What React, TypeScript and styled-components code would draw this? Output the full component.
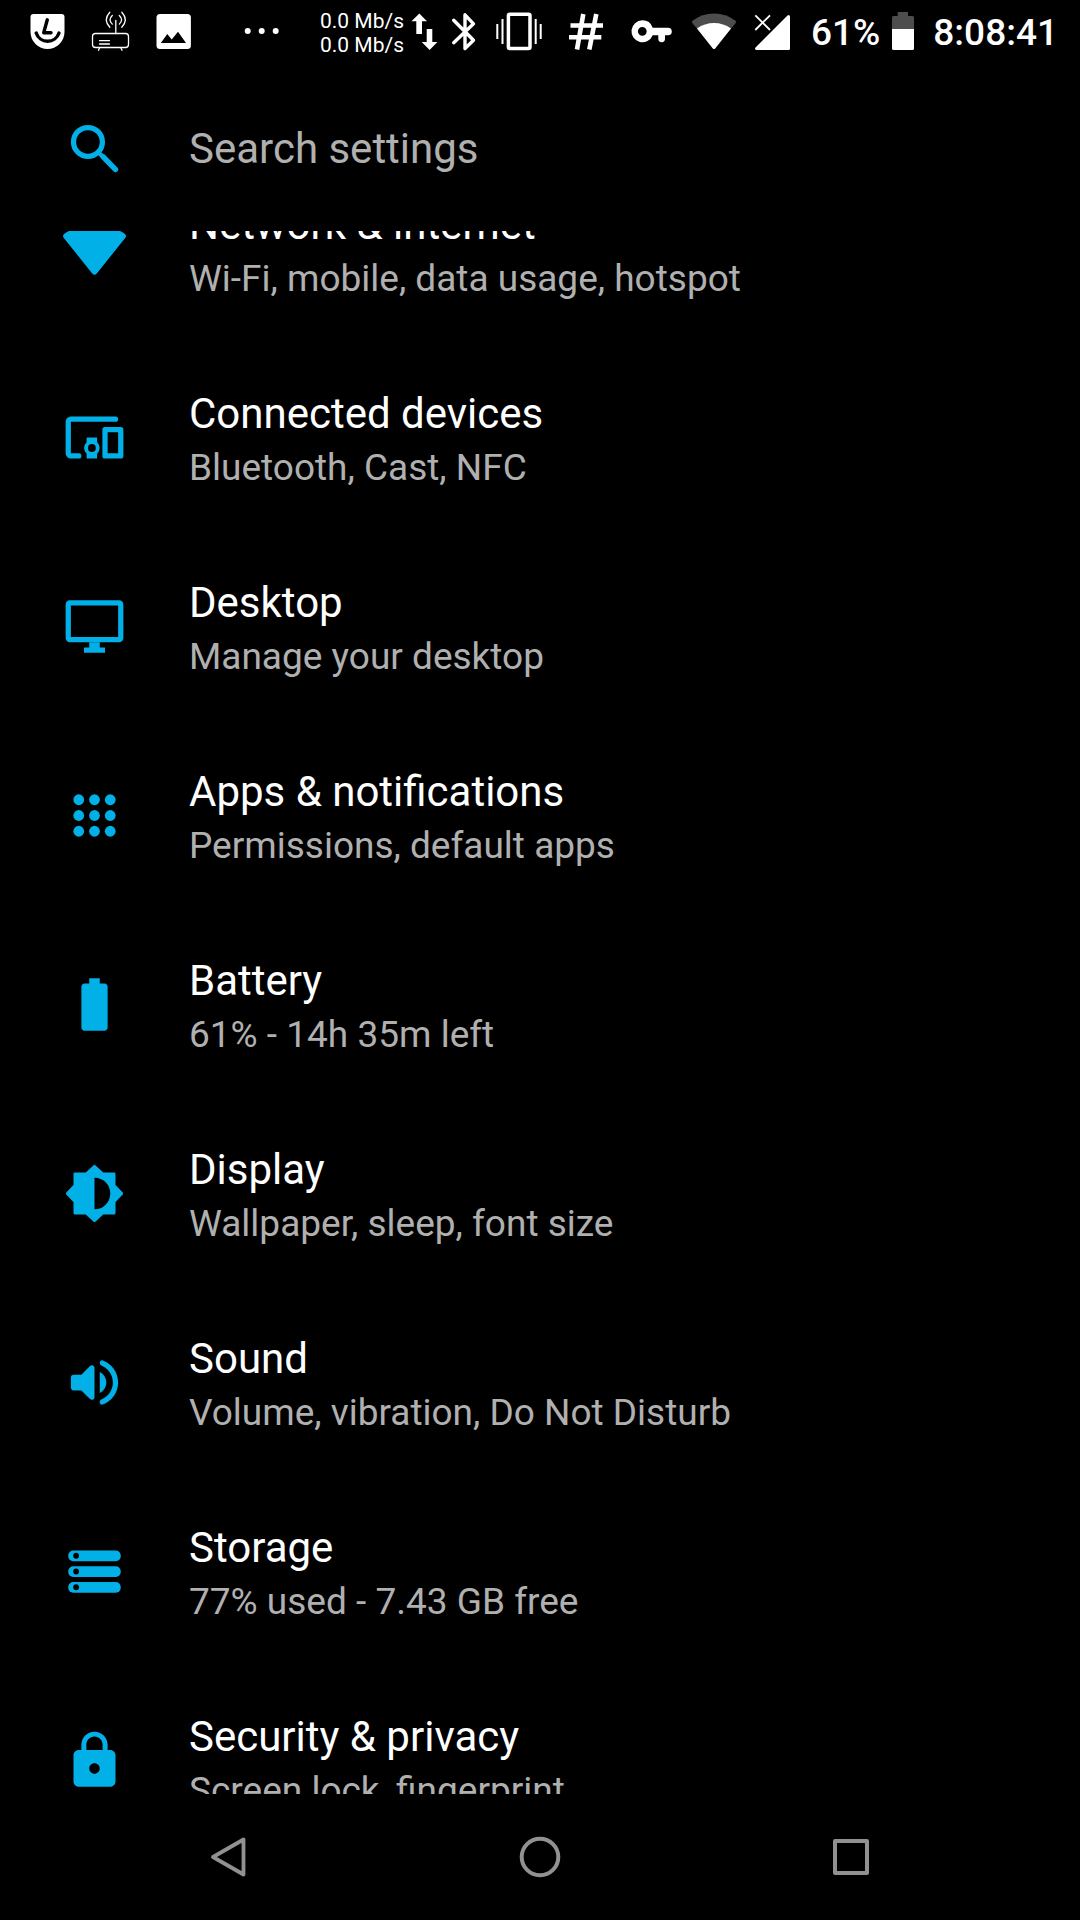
import React, { useLayoutEffect, useRef } from "react";
import styled, { createGlobalStyle } from "styled-components";

const ACCENT = "#00b0e6";
const SCROLLED = 77;

const GlobalStyle = createGlobalStyle`
  *, *::before, *::after { box-sizing: border-box; }
  body {
    margin: 0;
    background: #000;
    color: #fff;
    font-family: Roboto, "Noto Sans", sans-serif;
  }
`;

const Screen = styled.div`
  display: flex;
  flex-direction: column;
  height: 100vh;
  background: #000;
`;

const StatusBar = styled.header`
  display: flex;
  flex: none;
  justify-content: space-between;
  height: 63px;
  padding: 0 22px 0 16px;
  overflow: hidden;
`;

const StatusGroup = styled.div`
  display: flex;
  align-items: center;
`;

const Speed = styled.div`
  padding-top: 2px;
  font-size: 21px;
  line-height: 24px;
  white-space: nowrap;
`;

const StatusText = styled.span<{ $lead: number }>`
  margin-left: ${(p) => p.$lead}px;
  padding-top: 2px;
  font-size: 37px;
  font-weight: 500;
  line-height: 44px;
  white-space: nowrap;
`;

const Glyph = styled.svg`
  display: block;
  flex: none;
`;

const SearchBar = styled.label`
  display: flex;
  flex: none;
  align-items: center;
  gap: 63px;
  height: 168px;
  padding: 2px 63px 0;
`;

const SearchInput = styled.input`
  flex: 1;
  min-width: 0;
  height: 84px;
  padding: 0;
  border: 0;
  outline: 0;
  background: transparent;
  color: #fff;
  font: inherit;
  font-size: 42px;
  &::placeholder { color: #b0b0b0; opacity: 1; }
`;

const ScrollArea = styled.main`
  flex: 1;
  min-height: 0;
  overflow-y: auto;
  scrollbar-width: none;
`;

const List = styled.ul`
  margin: 0;
  padding: 0;
  list-style: none;
`;

const Row = styled.a`
  display: flex;
  align-items: center;
  gap: 63px;
  height: 189px;
  padding: 0 63px;
  color: inherit;
  text-decoration: none;
`;

const RowIcon = styled.svg`
  display: block;
  flex: none;
  width: 63px;
  height: 63px;
  fill: ${ACCENT};
`;

const RowText = styled.span`
  display: flex;
  flex-direction: column;
  padding-top: 4px;
  white-space: nowrap;
`;

const Title = styled.span`
  font-size: 42px;
  line-height: 56px;
`;

const Summary = styled.span`
  font-size: 37px;
  line-height: 52px;
  color: #b0b0b0;
`;

const NavBar = styled.nav`
  display: grid;
  flex: none;
  grid-template-columns: repeat(3, 1fr);
  height: 126px;
  padding: 0 73px;
`;

const NavButton = styled.button`
  display: flex;
  align-items: center;
  justify-content: center;
  padding: 0;
  border: 0;
  background: transparent;
`;

/* Status glyphs are drawn on a strip 63 units high; `at` is where the slot starts on it. */
function StatusIcon({ at, width, label, children }: {
  at: number; width: number; label: string; children: React.ReactNode;
}) {
  return (
    <Glyph width={width} height={63} viewBox={`${at} 0 ${width} 63`} fill="#fff" role="img" aria-label={label}>
      {children}
    </Glyph>
  );
}

const stroke = (width: number, color = "#fff") => ({
  fill: "none", stroke: color, strokeWidth: width,
  strokeLinecap: "round" as const, strokeLinejoin: "round" as const,
});

const line = stroke(2, ACCENT);

const items = [
  {
    title: "Network & internet",
    summary: "Wi-Fi, mobile, data usage, hotspot",
    icon: <path d="M.24 7.9c-.36-.45-.3-1.1.16-1.43C2.1 5.2 6.3 3 12 3s9.9 2.2 11.6 3.47c.46.33.52.98.16 1.43L12.8 21.6c-.4.5-1.2.5-1.6 0z" />,
  },
  {
    title: "Connected devices",
    summary: "Bluetooth, Cast, NFC",
    icon: (
      <>
        <path {...line} d="M20 5H3a1 1 0 0 0-1 1v12a1 1 0 0 0 1 1h3" />
        <rect {...line} x="16" y="9" width="6" height="10" />
        <path fillRule="evenodd" d="M9 12h4v1.8a3 3 0 0 1 0 4.4V20H9v-1.8a3 3 0 0 1 0-4.4zM11 14.5a1.5 1.5 0 1 0 0 3 1.5 1.5 0 0 0 0-3z" />
      </>
    ),
  },
  {
    title: "Desktop",
    summary: "Manage your desktop",
    icon: (
      <>
        <rect {...line} x="2" y="3" width="20" height="14" rx="0.6" />
        <path d="M10 18h4v2h2v2H8v-2h2z" />
      </>
    ),
  },
  {
    title: "Apps & notifications",
    summary: "Permissions, default apps",
    icon: (
      <>
        {[6, 12, 18].flatMap((y) => [6, 12, 18].map((x) => <circle key={`${x}-${y}`} cx={x} cy={y} r="2.05" />))}
      </>
    ),
  },
  {
    title: "Battery",
    summary: "61% - 14h 35m left",
    icon: <path d="M10 2h4v2h1.8c.66 0 1.2.54 1.2 1.2v15.6c0 .66-.54 1.2-1.2 1.2H8.2C7.54 22 7 21.46 7 20.8V5.2C7 4.54 7.54 4 8.2 4H10z" />,
  },
  {
    title: "Display",
    summary: "Wallpaper, sleep, font size",
    icon: (
      <>
        <path
          stroke={ACCENT}
          strokeLinejoin="round"
          d="M19.5 15.1L22.4 12 19.5 8.9V4.5H15.1L12 1.6 8.9 4.5H4.5V8.9L1.6 12 4.5 15.1V19.5H8.9L12 22.4 15.1 19.5H19.5z"
        />
        <path fill="#000" d="M12 18V6a6 6 0 0 1 0 12z" />
      </>
    ),
  },
  {
    title: "Sound",
    summary: "Volume, vibration, Do Not Disturb",
    icon: <path d="M3 10v4c0 .55.45 1 1 1h3l3.29 3.29c.63.63 1.71.18 1.71-.71V6.41c0-.89-1.08-1.34-1.71-.71L7 9H4c-.55 0-1 .45-1 1zm13.5 2c0-1.77-1.02-3.29-2.5-4.03v8.05c1.48-.73 2.5-2.25 2.5-4.02zM14 4.45v.2c0 .38.25.71.6.85C17.18 6.53 19 9.06 19 12s-1.82 5.47-4.4 6.5c-.36.14-.6.47-.6.85v.2c0 .63.63 1.07 1.21.85C18.6 19.11 21 15.84 21 12s-2.4-7.11-5.79-8.4c-.58-.23-1.21.22-1.21.85z" />,
  },
  {
    title: "Storage",
    summary: "77% used - 7.43 GB free",
    icon: (
      <>
        {[4, 10, 16].map((y) => (
          <g key={y}>
            <rect x="2" y={y} width="20" height="4.1" rx="1.9" />
            <circle cx="5" cy={y + 2} r="1.1" fill="#000" />
          </g>
        ))}
      </>
    ),
  },
  {
    title: "Security & privacy",
    summary: "Screen lock, fingerprint",
    icon: <path d="M18 8h-1V6c0-2.76-2.24-5-5-5S7 3.24 7 6v2H6c-1.1 0-2 .9-2 2v10c0 1.1.9 2 2 2h12c1.1 0 2-.9 2-2V10c0-1.1-.9-2-2-2zm-6 9c-1.1 0-2-.9-2-2s.9-2 2-2 2 .9 2 2-.9 2-2 2zm3.1-9H8.9V6c0-1.71 1.39-3.1 3.1-3.1 1.71 0 3.1 1.39 3.1 3.1v2z" />,
  },
];

export default function App() {
  const scroller = useRef<HTMLElement>(null);

  useLayoutEffect(() => {
    if (scroller.current) scroller.current.scrollTop = SCROLLED;
  }, []);

  return (
    <>
      <GlobalStyle />
      <Screen>
        <StatusBar>
          <StatusGroup>
            <StatusIcon at={16} width={63} label="Clock app">
              <path d="M33.5 14h28a3 3 0 0 1 3 3v15a17 17 0 0 1-34 0V17a3 3 0 0 1 3-3z" />
              <path {...stroke(3.4, "#000")} d="M47.3 19.8L43.7 32.8H51" />
              <path {...stroke(3.4, "#000")} d="M36.2 33a12 12 0 0 0 22.8 0" />
            </StatusIcon>
            <StatusIcon at={79} width={63} label="Router">
              <g {...stroke(1.3)}>
                <rect x="92.5" y="33.5" width="36" height="14" rx="3" />
                <path d="M99.5 40.7h10M99.5 44h10M99.5 48l-1 2.3M121 48l1 2.3M115.8 20.5v13" />
                <path d="M112.3 15.5q-4.6 4.3 0 8.6M109.8 12.3q-7 7.5 0 15M119.3 15.5q4.6 4.3 0 8.6M121.8 12.3q7 7.5 0 15" />
              </g>
            </StatusIcon>
            <StatusIcon at={142} width={63} label="Picture">
              <rect x="156.5" y="14" width="34.4" height="35" rx="3.5" />
              <path fill="#000" d="M160.8 43l6.5-9 4.4 5.5 6.3-7.8 8 11.3z" />
            </StatusIcon>
            <StatusIcon at={205} width={115} label="More notifications">
              <circle cx="247.7" cy="31" r="3" />
              <circle cx="261.7" cy="31" r="3" />
              <circle cx="275.7" cy="31" r="3" />
            </StatusIcon>
            <Speed>
              <div>0.0 Mb/s</div>
              <div>0.0 Mb/s</div>
            </Speed>
          </StatusGroup>
          <StatusGroup>
            <StatusIcon at={408} width={32} label="Data transfer">
              <path d="M418.3 13.5l7.7 7.8h-5V34h-5.7V21.3h-4.8zM428.6 50l-7.9-8h5V29h5.6v13h5.1z" />
            </StatusIcon>
            <StatusIcon at={440} width={44} label="Bluetooth">
              <path {...stroke(3.4)} d="M452.7 20.2L472.5 40.3 464 48.5V14.8L472.5 23.8 452.7 42.7" />
            </StatusIcon>
            <StatusIcon at={484} width={68} label="Vibrate">
              <rect {...stroke(3.5)} x="507.4" y="14.2" width="21.6" height="34.4" rx="1.5" />
              <path {...stroke(2)} strokeLinecap="butt" d="M496.3 24v15M501.5 19v25M534.7 19v25M539.7 24v15" />
            </StatusIcon>
            <StatusIcon at={552} width={66} label="Root access">
              <path {...stroke(4.6)} strokeLinecap="butt" d="M569.5 25.5H602M568 37.3H600.3M582.3 14L576 49.5M595.3 14L588.3 49.5" />
            </StatusIcon>
            <StatusIcon at={618} width={64} label="VPN">
              <path
                fillRule="evenodd"
                d="M641.3 20.3a11 11 0 0 1 10.4 7.4H667a3.8 3.8 0 0 1 0 7.6h-3v3.5a3.3 3.3 0 0 1-6.7 0v-3.5h-5.6A11 11 0 1 1 641.3 20.3zM641.3 26.9a4.4 4.4 0 1 0 0 8.8 4.4 4.4 0 0 0 0-8.8z"
              />
            </StatusIcon>
            <StatusIcon at={682} width={62} label="Wi-Fi signal">
              <path fill="#4d4d4d" d="M713 49L691.3 23q-1-1.5.5-2.6a36 36 0 0 1 42.4 0q1.5 1.1.5 2.6z" />
              <path d="M714.2 48.5L730 28.5a29 29 0 0 0-34 0L711.8 48.5q1.2 1.2 2.4 0z" />
            </StatusIcon>
            <StatusIcon at={744} width={54} label="No mobile signal">
              <path d="M789 16.5V48.5a1.5 1.5 0 0 1-1.5 1.5H755.5q-2.5-.5-1-2.5L786.5 15.5q2-1.5 2.5 1z" />
              <path {...stroke(1.8)} strokeLinecap="butt" d="M754.3 15.3L769 30M769 15.3L754.3 30" />
            </StatusIcon>
            <StatusText $lead={12}>61%</StatusText>
            <StatusIcon at={880} width={46} label="Battery">
              <path fill="#4d4d4d" d="M897.7 12H908v4h4.5a1.5 1.5 0 0 1 1.5 1.5V29H892V17.5a1.5 1.5 0 0 1 1.5-1.5h4.2z" />
              <path d="M892 29h22v19.5a1.5 1.5 0 0 1-1.5 1.5h-19a1.5 1.5 0 0 1-1.5-1.5z" />
            </StatusIcon>
            <StatusText $lead={7}>8:08:41</StatusText>
          </StatusGroup>
        </StatusBar>

        <SearchBar>
          <RowIcon viewBox="0 0 24 24" aria-hidden="true">
            <circle {...line} cx="9.5" cy="9.5" r="5.5" />
            <path d="M14.4 15.7l.1-1.2 1.4-.2 4.8 4.9a1.04 1.04 0 0 1-1.5 1.5z" />
            <path d="M13.2 14.3l1.1-1.1 1.6 1.3-1.3 1.3z" />
          </RowIcon>
          <SearchInput type="search" placeholder="Search settings" aria-label="Search settings" />
        </SearchBar>

        <ScrollArea ref={scroller}>
          <List>
            {items.map((item) => (
              <li key={item.title}>
                <Row href="#">
                  <RowIcon viewBox="0 0 24 24" aria-hidden="true">{item.icon}</RowIcon>
                  <RowText>
                    <Title>{item.title}</Title>
                    <Summary>{item.summary}</Summary>
                  </RowText>
                </Row>
              </li>
            ))}
          </List>
        </ScrollArea>

        <NavBar aria-label="System">
          <NavButton type="button" aria-label="Back">
            <Glyph width={42} height={42} viewBox="0 0 42 42">
              <path {...stroke(3.8, "#919191")} d="M35.5 3.5V38.5L5 21z" />
            </Glyph>
          </NavButton>
          <NavButton type="button" aria-label="Home">
            <Glyph width={42} height={42} viewBox="0 0 42 42">
              <circle {...stroke(4, "#919191")} cx="21" cy="21" r="18.3" />
            </Glyph>
          </NavButton>
          <NavButton type="button" aria-label="Recent apps">
            <Glyph width={42} height={42} viewBox="0 0 42 42">
              <rect {...stroke(4, "#919191")} x="5" y="5" width="32" height="32" />
            </Glyph>
          </NavButton>
        </NavBar>
      </Screen>
    </>
  );
}
